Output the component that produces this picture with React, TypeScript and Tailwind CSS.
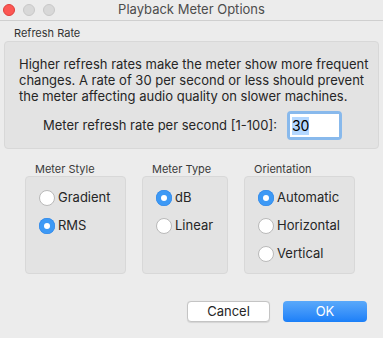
function Radio({ label, checked }: { label: string; checked?: boolean }) {
    return (
        <div className="flex h-[16px] items-center gap-[3px]">
            {checked ? (
                <span className="flex h-[16px] w-[16px] items-center justify-center rounded-full bg-[#3d99f5] shadow-[inset_0_0_0_0.5px_#2f86e6]">
                    <span className="h-[6px] w-[6px] rounded-full bg-white" />
                </span>
            ) : (
                <span className="h-[16px] w-[16px] rounded-full border border-[#b9b9b9] bg-white" />
            )}
            <span className="text-[13px] text-[#262626]">{label}</span>
        </div>
    )
}

function Group({ title, width, children }: { title: string; width: string; children: React.ReactNode }) {
    return (
        <div className="flex flex-col">
            <div className="ml-[10px] h-[14px] text-[11px] leading-[14px] text-[#3a3a3a]">{title}</div>
            <div className={`h-[98px] rounded-[4px] border border-[#d8d8d8] bg-[#e3e3e3] px-[13px] pt-[13px] flex flex-col gap-[12px] ${width}`}>
                {children}
            </div>
        </div>
    )
}

export default function App() {
    return (
        <div className="h-[338px] w-[383px] bg-[#ececec] font-['Inter','Liberation_Sans',sans-serif] text-[#262626]">
            {/* title bar */}
            <div className="relative flex h-[21px] items-center border-b border-[#cfcfcf] bg-[#ececec]">
                <div className="absolute left-[3px] top-[4px] flex gap-[8px]">
                    <span className="h-[12px] w-[12px] rounded-full bg-[#fc5753] border border-[#df3e3a]" />
                    <span className="h-[12px] w-[12px] rounded-full bg-[#d8d8d8] border border-[#c8c8c8]" />
                    <span className="h-[12px] w-[12px] rounded-full bg-[#d8d8d8] border border-[#c8c8c8]" />
                </div>
                <div className="w-full text-center text-[13px] text-[#4d4d4d]">Playback Meter Options</div>
            </div>

            <div className="ml-[14px] mt-[5px] h-[14px] text-[11px] leading-[14px] text-[#333]">Refresh Rate</div>
            <div className="mx-[4px] mt-[1px] h-[108px] rounded-[4px] border border-[#d8d8d8] bg-[#e3e3e3] pl-[14px] pt-[14px]">
                <p className="text-[13px] leading-[16px] text-[#262626]">
                    Higher refresh rates make the meter show more frequent changes. A rate of 30 per second or less should prevent the meter affecting audio quality on slower machines.
                </p>
                <div className="mt-[7px] flex items-center">
                    <span className="ml-[24px] text-[13px]">Meter refresh rate per second [1-100]:</span>
                    <div className="ml-[10px] rounded-[4px] bg-[#88b9ec] p-[3px]">
                        <div className="flex h-[23px] w-[49px] items-center bg-white pl-[2px]">
                            <span className="bg-[#b3d7ff] text-[14px] leading-[18px] text-black">30</span>
                        </div>
                    </div>
                </div>
            </div>

            <div className="ml-[25px] mt-[13px] flex gap-[16px]">
                <Group title="Meter Style" width="w-[101px]">
                    <Radio label="Gradient" />
                    <Radio label="RMS" checked />
                </Group>
                <Group title="Meter Type" width="w-[86px]">
                    <Radio label="dB" checked />
                    <Radio label="Linear" />
                </Group>
                <Group title="Orientation" width="w-[111px]">
                    <Radio label="Automatic" checked />
                    <Radio label="Horizontal" />
                    <Radio label="Vertical" />
                </Group>
            </div>

            <div className="mr-[16px] mt-[27px] flex justify-end gap-[13px]">
                <button className="h-[21px] w-[83px] rounded-[4px] border border-[#c4c4c4] bg-white text-[13px] text-[#262626] shadow-[0_0.5px_1px_rgba(0,0,0,0.1)]">
                    Cancel
                </button>
                <button className="h-[21px] w-[84px] rounded-[4px] bg-gradient-to-b from-[#5aa9fa] to-[#1a7ff8] text-[13px] text-white">
                    OK
                </button>
            </div>
        </div>
    )
}
